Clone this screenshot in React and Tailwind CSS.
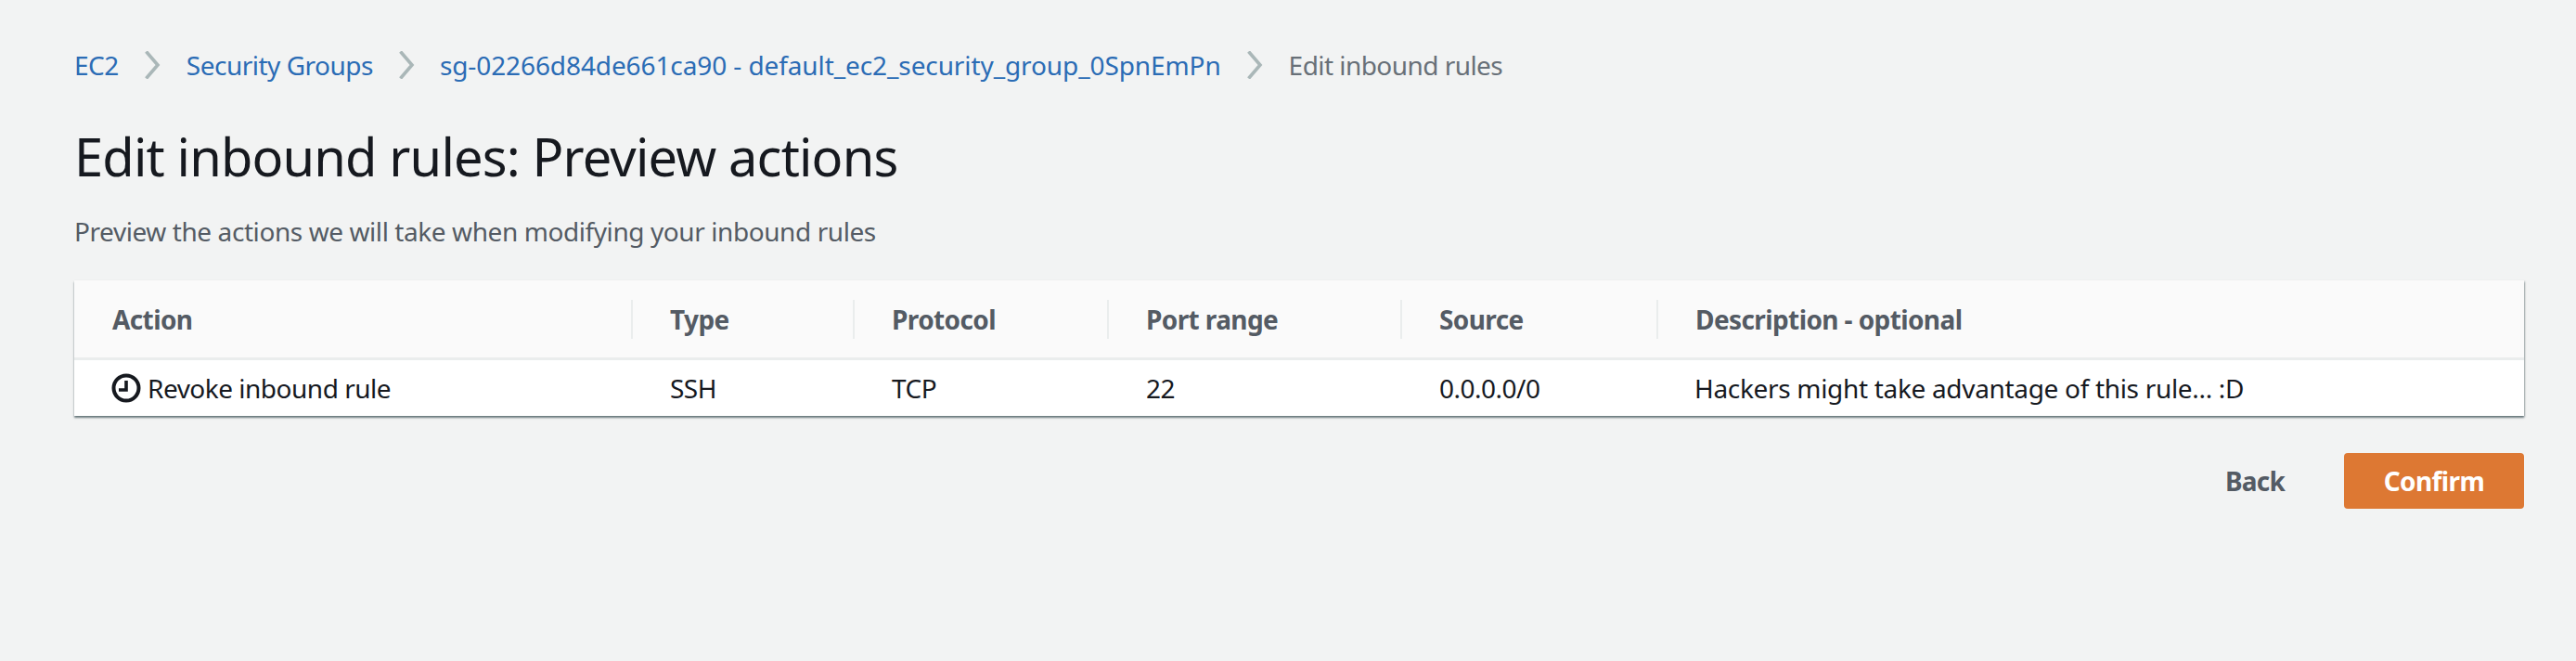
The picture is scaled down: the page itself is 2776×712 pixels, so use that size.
import React from "react";

const font = "font-['Noto_Sans',sans-serif]";

const columns = [
  { label: "Action", width: "w-[602px]" },
  { label: "Type", width: "w-[239px]" },
  { label: "Protocol", width: "w-[274px]" },
  { label: "Port range", width: "w-[316px]" },
  { label: "Source", width: "w-[276px]" },
  { label: "Description - optional", width: "flex-1" },
];

function Chevron({ className }) {
  return (
    <svg width="17" height="30" viewBox="0 0 17 30" fill="none" className={`shrink-0 ${className}`}>
      <path d="M1.5 0.5 L14 15 L1.5 29.5" stroke="#aab7b8" strokeWidth="3.6" />
    </svg>
  );
}

function ClockIcon() {
  return (
    <svg width="32" height="32" viewBox="0 0 32 32" fill="none" className="shrink-0">
      <circle cx="16" cy="16" r="13.5" stroke="#16191f" strokeWidth="4" />
      <path d="M16 8 V18 H8" stroke="#16191f" strokeWidth="3.6" />
    </svg>
  );
}

export default function App() {
  return (
    <div className={`${font} h-[712px] bg-[#f2f3f3] pl-[80px] pr-[56px] pt-[52px]`}>
      <nav className="flex h-[36px] items-center text-[28px] text-[#2b6cb5]">
        <span className="tracking-[-0.5px]">EC2</span>
        <Chevron className="mx-[28px]" />
        <span className="tracking-[-0.5px]">Security Groups</span>
        <Chevron className="ml-[28px] mr-[27px]" />
        <span className="tracking-[-0.1px]">sg-02266d84de661ca90 - default_ec2_security_group_0SpnEmPn</span>
        <Chevron className="mx-[28px]" />
        <span className="tracking-[-0.55px] text-[#687078]">Edit inbound rules</span>
      </nav>

      <h1 className="mt-[48px] h-[64px] text-[56px] leading-[64px] tracking-[-0.85px] text-[#16191f]">
        Edit inbound rules: Preview actions
      </h1>

      <p className="mt-[31px] h-[36px] text-[28px] leading-[36px] tracking-[-0.42px] text-[#545b64]">
        Preview the actions we will take when modifying your inbound rules
      </p>

      <div className="mt-[35px] bg-white shadow-[0_2px_2px_rgba(0,28,36,0.5),1px_1px_2px_rgba(0,28,36,0.2)]">
        <div className="flex h-[86px] items-center border-b-[3px] border-[#eaeded] bg-[#fafafa]">
          {columns.map((col, i) => (
            <div
              key={col.label}
              className={`${col.width} flex h-[42px] items-center text-[28px] font-bold tracking-[-0.6px] text-[#545b64] ${i === 0 ? "pl-[41px]" : "pl-[40px]"} ${i < 5 ? "border-r-2 border-[#eaeded]" : ""}`}
            >
              {col.label}
            </div>
          ))}
        </div>
        <div className="flex h-[60px] items-center text-[28px] tracking-[-0.5px] text-[#16191f]">
          <div className="flex w-[602px] items-center gap-[7px] pl-[40px]">
            <ClockIcon />
            <span>Revoke inbound rule</span>
          </div>
          <div className="w-[239px] pl-[40px]">SSH</div>
          <div className="w-[274px] pl-[40px]">TCP</div>
          <div className="w-[316px] pl-[40px]">22</div>
          <div className="w-[276px] pl-[40px]">0.0.0.0/0</div>
          <div className="flex-1 pl-[39px] tracking-[-0.32px]">Hackers might take advantage of this rule... :D</div>
        </div>
      </div>

      <div className="mt-[40px] flex items-center justify-end">
        <button className="mr-[64px] text-[28px] font-bold tracking-[-0.8px] text-[#545b64]">Back</button>
        <button className="h-[60px] w-[194px] rounded-[4px] bg-[#dd7833] text-[28px] font-bold tracking-[-0.6px] text-white">
          Confirm
        </button>
      </div>
    </div>
  );
}
